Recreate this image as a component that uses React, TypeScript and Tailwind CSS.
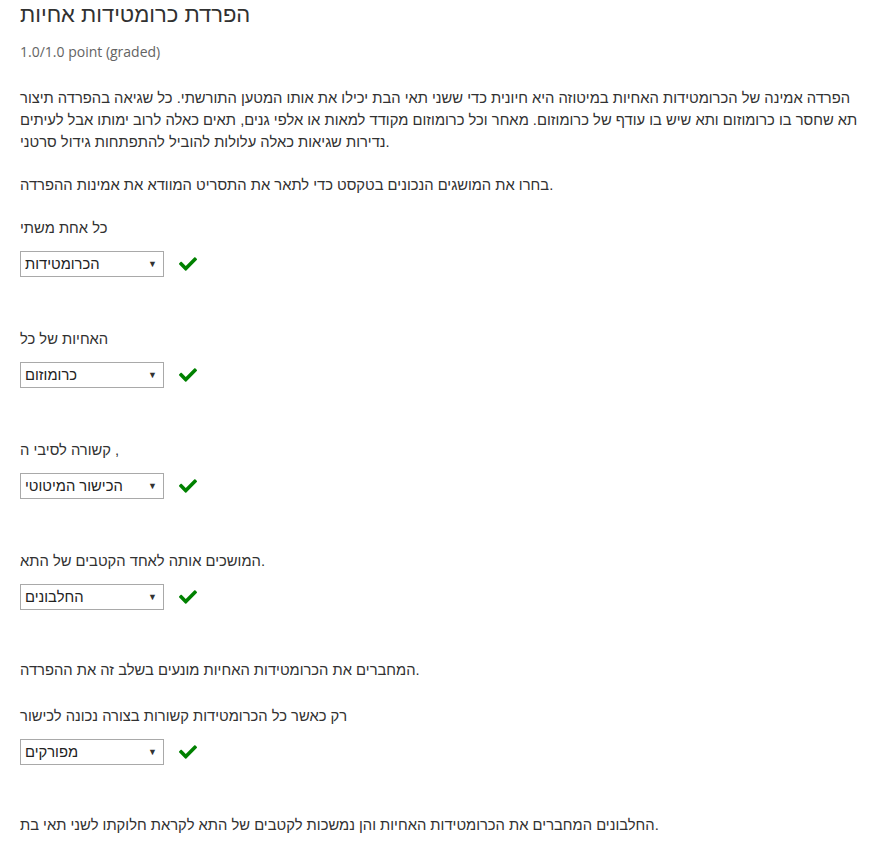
// Inline dropdown problem: sister chromatid separation
import { FaCheck } from 'react-icons/fa';

function Dropdown({ value }: { value: string }): React.JSX.Element {
  return (
    <div className="mt-[12px] flex items-center">
      <div className="flex h-[26px] w-[144px] items-center justify-between border border-[#a9a9a9] bg-white pl-[4px] pr-[6px]">
        <span className="text-[14.75px] text-[#222]">{value}</span>
        <span className="text-[9px] leading-none text-[#333]">▼</span>
      </div>
      <FaCheck className="ml-[15px] h-[18px] w-[18px] text-[#008100]" />
    </div>
  );
}

export default function App(): React.JSX.Element {
  return (
    <div className="min-h-screen bg-white px-5 text-[14.75px] leading-[22px] text-[#313131] font-['Liberation_Sans',Arial,sans-serif]">
      <h2 className="text-[22px] leading-[30px] text-[#313131]">הפרדת כרומטידות אחיות</h2>
      <div className="mt-[11px] font-['Open_Sans',sans-serif] text-[14px] text-[#646464]">
        1.0/1.0 point (graded)
      </div>

      <p className="mt-[24px] whitespace-nowrap">
        הפרדה אמינה של הכרומטידות האחיות במיטוזה היא חיונית כדי ששני תאי הבת יכילו את אותו המטען התורשתי. כל שגיאה בהפרדה תיצור
        <br />
        תא שחסר בו כרומוזום ותא שיש בו עודף של כרומוזום. מאחר וכל כרומוזום מקודד למאות או אלפי גנים, תאים כאלה לרוב ימותו אבל לעיתים
        <br />
        נדירות שגיאות כאלה עלולות להוביל להתפתחות גידול סרטני.
      </p>
      <p className="mt-[21px]">בחרו את המושגים הנכונים בטקסט כדי לתאר את התסריט המוודא את אמינות ההפרדה.</p>

      <p className="mt-[21px]">כל אחת משתי</p>
      <Dropdown value="הכרומטידות" />

      <p className="mt-[51px]">האחיות של כל</p>
      <Dropdown value="כרומוזום" />

      <p className="mt-[51px]">קשורה לסיבי ה ,</p>
      <Dropdown value="הכישור המיטוטי" />

      <p className="mt-[51px]">המושכים אותה לאחד הקטבים של התא.</p>
      <Dropdown value="החלבונים" />

      <p className="mt-[49px]">המחברים את הכרומטידות האחיות מונעים בשלב זה את ההפרדה.</p>
      <p className="mt-[24px]">רק כאשר כל הכרומטידות קשורות בצורה נכונה לכישור</p>
      <Dropdown value="מפורקים" />

      <p className="mt-[49px]">החלבונים המחברים את הכרומטידות האחיות והן נמשכות לקטבים של התא לקראת חלוקתו לשני תאי בת.</p>
    </div>
  );
}
